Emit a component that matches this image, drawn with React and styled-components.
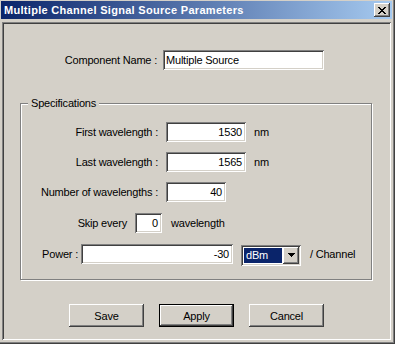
import React from "react";
import styled, { createGlobalStyle, css } from "styled-components";

const GlobalStyle = createGlobalStyle`
  html, body { margin: 0; padding: 0; background: #d4d0c8; }
  body {
    font-family: "Liberation Sans", Arial, sans-serif;
    font-size: 11px;
    letter-spacing: -0.2px;
    color: #000;
  }
`;

const raised = css`
  box-shadow: inset -1px -1px 0 #404040, inset 1px 1px 0 #ffffff,
    inset -2px -2px 0 #808080, inset 2px 2px 0 #d4d0c8;
`;

const sunken = css`
  box-shadow: inset 1px 1px 0 #808080, inset -1px -1px 0 #ffffff,
    inset 2px 2px 0 #404040, inset -2px -2px 0 #d4d0c8;
`;

const Window = styled.div`
  width: 395px;
  height: 344px;
  box-sizing: border-box;
  padding: 1px 3px 0 1px;
  background: #d4d0c8;
  box-shadow: inset -1px -1px 0 #404040, inset -2px -2px 0 #808080;
  display: flex;
  flex-direction: column;
`;

const TitleBar = styled.div`
  height: 18px;
  flex: none;
  display: flex;
  align-items: center;
  padding: 0 2px 0 3px;
  background: linear-gradient(to right, #0a246a, #a6caf0);
  color: #fff;
  font-weight: bold;
  font-size: 11px;
  letter-spacing: 0.3px;
`;

const Title = styled.span`
  flex: 1;
  white-space: nowrap;
`;

const CloseButton = styled.div`
  width: 16px;
  height: 14px;
  background: #d4d0c8;
  ${raised};
  display: flex;
  align-items: center;
  justify-content: center;
`;

const Panel = styled.div`
  flex: 1;
  margin: 3px 1px 4px 1px;
  padding: 2px;
  ${sunken};
  display: flex;
  flex-direction: column;
`;

const NameRow = styled.div`
  display: flex;
  align-items: center;
  margin-top: 26px;
`;

const Label = styled.span`
  width: ${(p) => p.$w}px;
  text-align: right;
  white-space: nowrap;
  flex: none;
`;

const TextBox = styled.div`
  box-sizing: border-box;
  width: ${(p) => p.$w}px;
  height: 20px;
  margin-left: ${(p) => p.$gap}px;
  background: #fff;
  ${sunken};
  display: flex;
  align-items: center;
  justify-content: ${(p) => (p.$right ? "flex-end" : "flex-start")};
  padding: 0 4px 0 3px;
  white-space: nowrap;
  flex: none;
`;

const Group = styled.div`
  position: relative;
  box-sizing: border-box;
  width: 352px;
  height: 177px;
  margin: 33px 0 0 16px;
  border: 1px solid #808080;
  box-shadow: inset 1px 1px 0 #fff, 1px 1px 0 #fff;
  padding-top: 18px;
  display: flex;
  flex-direction: column;
`;

const Legend = styled.span`
  position: absolute;
  top: -7px;
  left: 7px;
  padding: 0 3px;
  background: #d4d0c8;
`;

const FieldRow = styled.div`
  display: flex;
  align-items: center;
  height: 20px;
  margin-top: ${(p) => p.$top || 0}px;
`;

const Unit = styled.span`
  margin-left: ${(p) => p.$gap}px;
  white-space: nowrap;
`;

const Combo = styled.div`
  box-sizing: border-box;
  width: 60px;
  height: 21px;
  margin-left: 8px;
  margin-top: 2px;
  padding: 2px;
  background: #fff;
  ${sunken};
  display: flex;
`;

const Selected = styled.div`
  flex: 1;
  margin: 1px;
  padding-left: 2px;
  background: #0a246a;
  color: #fff;
  display: flex;
  align-items: center;
`;

const DropButton = styled.div`
  width: 16px;
  height: 17px;
  background: #d4d0c8;
  ${raised};
  display: flex;
  align-items: center;
  justify-content: center;
`;

const ButtonRow = styled.div`
  display: flex;
  justify-content: center;
  gap: 15px;
  margin-top: 24px;
`;

const Button = styled.div`
  width: 75px;
  height: 23px;
  box-sizing: border-box;
  display: flex;
  align-items: center;
  justify-content: center;
  background: #d4d0c8;
  ${(p) =>
    p.$default
      ? css`
          box-shadow: inset 0 0 0 1px #000, inset -2px -2px 0 #404040,
            inset 2px 2px 0 #ffffff, inset -3px -3px 0 #808080;
        `
      : raised};
`;

export default function App() {
  return (
    <>
      <GlobalStyle />
      <Window>
        <TitleBar>
          <Title>Multiple Channel Signal Source Parameters</Title>
          <CloseButton>
            <svg width="8" height="7" viewBox="0 0 8 7" shapeRendering="crispEdges">
              <path d="M0 0h2v1h-2zM6 0h2v1h-2zM1 1h2v1h-2zM5 1h2v1h-2zM2 2h4v1h-4zM3 3h2v1h-2zM2 4h4v1h-4zM1 5h2v1h-2zM5 5h2v1h-2zM0 6h2v1h-2zM6 6h2v1h-2z" fill="#000" />
            </svg>
          </CloseButton>
        </TitleBar>
        <Panel>
          <NameRow>
            <Label $w={153}>Component Name :</Label>
            <TextBox $w={161} $gap={6}>Multiple Source</TextBox>
          </NameRow>

          <Group>
            <Legend>Specifications</Legend>
            <FieldRow>
              <Label $w={137}>First wavelength :</Label>
              <TextBox $w={80} $gap={8} $right>1530</TextBox>
              <Unit $gap={8}>nm</Unit>
            </FieldRow>
            <FieldRow $top={10}>
              <Label $w={137}>Last wavelength :</Label>
              <TextBox $w={80} $gap={8} $right>1565</TextBox>
              <Unit $gap={8}>nm</Unit>
            </FieldRow>
            <FieldRow $top={10}>
              <Label $w={137}>Number of wavelengths :</Label>
              <TextBox $w={60} $gap={8} $right>40</TextBox>
            </FieldRow>
            <FieldRow $top={11}>
              <Label $w={106}>Skip every</Label>
              <TextBox $w={27} $gap={8} $right>0</TextBox>
              <Unit $gap={9}>wavelength</Unit>
            </FieldRow>
            <FieldRow $top={11}>
              <Label $w={57}>Power :</Label>
              <TextBox $w={152} $gap={3} $right>-30</TextBox>
              <Combo>
                <Selected>dBm</Selected>
                <DropButton>
                  <svg width="7" height="4" viewBox="0 0 7 4" shapeRendering="crispEdges">
                    <path d="M0 0h7v1h-7zM1 1h5v1h-5zM2 2h3v1h-3zM3 3h1v1h-1z" fill="#000" />
                  </svg>
                </DropButton>
              </Combo>
              <Unit $gap={9}>/ Channel</Unit>
            </FieldRow>
          </Group>

          <ButtonRow>
            <Button>Save</Button>
            <Button $default>Apply</Button>
            <Button>Cancel</Button>
          </ButtonRow>
        </Panel>
      </Window>
    </>
  );
}
